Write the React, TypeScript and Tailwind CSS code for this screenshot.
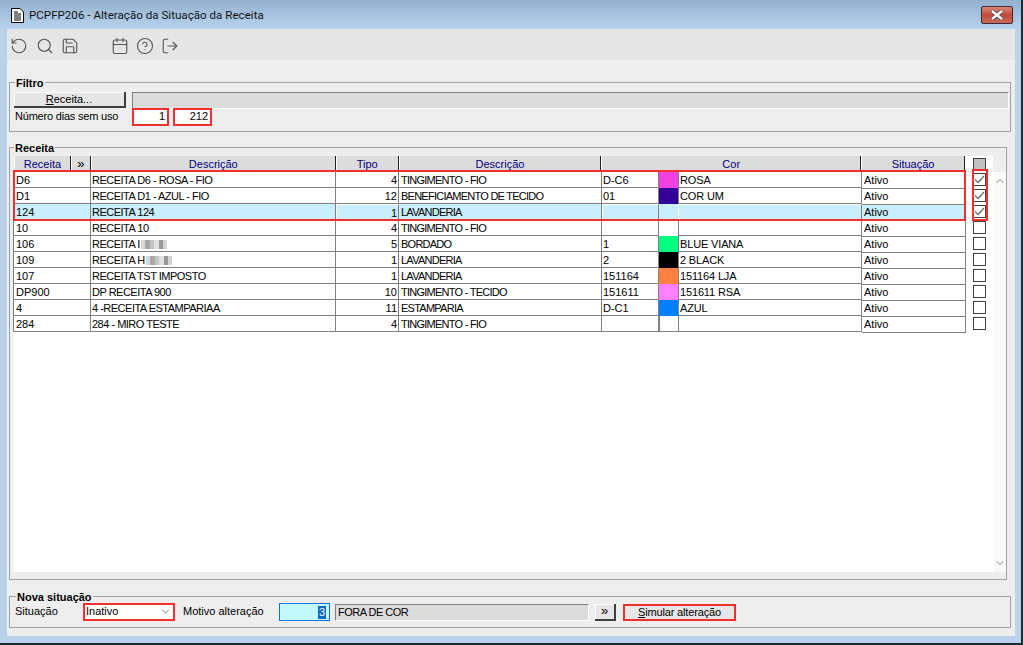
import { Calendar, ChevronDown, ChevronUp, CircleHelp, LogOut, RotateCcw, Save, Search } from "lucide-react";

type Row = {
  code: string;
  name: string;
  blur?: boolean;
  type: string;
  group: string;
  color: string;
  swatch: string;
  colorName: string;
  checked?: boolean;
  active?: boolean;
};

const rows: Row[] = [
  { code: "D6", name: "RECEITA D6 - ROSA - FIO", type: "4", group: "TINGIMENTO - FIO", color: "D-C6", swatch: "bg-[#f040e0]", colorName: "ROSA", checked: true },
  { code: "D1", name: "RECEITA D1 - AZUL - FIO", type: "12", group: "BENEFICIAMENTO DE TECIDO", color: "01", swatch: "bg-[#330099]", colorName: "COR UM", checked: true },
  { code: "124", name: "RECEITA 124", type: "1", group: "LAVANDERIA", color: "", swatch: "bg-[#c9eefc]", colorName: "", checked: true, active: true },
  { code: "10", name: "RECEITA 10", type: "4", group: "TINGIMENTO - FIO", color: "", swatch: "bg-white", colorName: "" },
  { code: "106", name: "RECEITA I", blur: true, type: "5", group: "BORDADO", color: "1", swatch: "bg-[#00ff80]", colorName: "BLUE VIANA" },
  { code: "109", name: "RECEITA H", blur: true, type: "1", group: "LAVANDERIA", color: "2", swatch: "bg-black", colorName: "2 BLACK" },
  { code: "107", name: "RECEITA TST IMPOSTO", type: "1", group: "LAVANDERIA", color: "151164", swatch: "bg-[#ff8040]", colorName: "151164 LJA" },
  { code: "DP900", name: "DP RECEITA 900", type: "10", group: "TINGIMENTO - TECIDO", color: "151611", swatch: "bg-[#ff80ff]", colorName: "151611 RSA" },
  { code: "4", name: "4 -RECEITA ESTAMPARIAA", type: "11", group: "ESTAMPARIA", color: "D-C1", swatch: "bg-[#0080ff]", colorName: "AZUL" },
  { code: "284", name: "284 - MIRO TESTE", type: "4", group: "TINGIMENTO - FIO", color: "", swatch: "bg-white border-l border-b border-[#808080]", colorName: "" },
];

const headers = [
  { label: "Receita", width: "w-[57px]" },
  { label: "»", width: "w-[20px]" },
  { label: "Descrição", width: "w-[245px]" },
  { label: "Tipo", width: "w-[63px]" },
  { label: "Descrição", width: "w-[203px]" },
  { label: "Cor", width: "w-[260px]" },
  { label: "Situação", width: "w-[104px]" },
];

const toolIcons = [
  { Icon: RotateCcw, className: "ml-[3px]" },
  { Icon: Search, className: "ml-[8px]" },
  { Icon: Save, className: "ml-[7px]" },
  { Icon: Calendar, className: "ml-[32px]" },
  { Icon: CircleHelp, className: "ml-[7px]" },
  { Icon: LogOut, className: "ml-[7px]" },
];

function BlurBlocks() {
  return (
    <span className="ml-[1px] inline-flex h-[9px] align-[-1px]">
      <span className="w-[4px] bg-[#d8d8d8]" />
      <span className="w-[5px] bg-[#a8a8a8]" />
      <span className="w-[4px] bg-[#c4c4c4]" />
      <span className="w-[5px] bg-[#e0e0e0]" />
      <span className="w-[4px] bg-[#989898]" />
      <span className="w-[4px] bg-[#d4d4d4]" />
    </span>
  );
}

function CheckBox({ checked }: { checked?: boolean }) {
  return (
    <div className="flex h-[16px] items-start justify-center pt-[1px]">
      <div className="flex h-[13px] w-[13px] items-center justify-center border border-[#404040] bg-white">
        {checked && (
          <svg width="11" height="9" viewBox="0 0 11 9" fill="none" stroke="#707070" strokeWidth="1.4">
            <path d="M1 4.5 L4 7.5 L10 1" />
          </svg>
        )}
      </div>
    </div>
  );
}

function GridRow({ row }: { row: Row }) {
  const bg = row.active ? "bg-[#c9eefc]" : "bg-white";
  const inset = row.active ? "border-t border-l border-t-white border-l-white" : "";
  const cell = `h-[16px] truncate border-r border-b border-r-[#808080] border-b-[#808080] pt-[1px] leading-[14px] ${bg}`;
  return (
    <div className="grid h-[16px] grid-cols-[78px_245px_63px_203px_57px_19px_184px_104px]">
      <div className={`${cell} border-l border-l-[#808080] pl-[2px]`}>{row.code}</div>
      <div className={`${cell} pl-[1px] tracking-[-0.5px]`}>
        {row.name}
        {row.blur && <BlurBlocks />}
      </div>
      <div className={`${cell} ${inset} pr-[1px] text-right`}>{row.type}</div>
      <div className={`${cell} pl-[2px] tracking-[-0.75px]`}>{row.group}</div>
      <div className={`${cell} ${inset} pl-[1px]`}>{row.color}</div>
      <div className={`h-[16px] ${row.swatch}`} />
      <div className={`${cell} ${inset} border-l border-l-[#808080] pl-[1px] tracking-[-0.15px]`}>{row.colorName}</div>
      <div className={`${cell} translate-y-px pl-[2px]`}>
        <span className="relative -top-px">Ativo</span>
      </div>
    </div>
  );
}

export default function App() {
  return (
    <div className="h-[645px] w-[1023px] overflow-hidden bg-[#1a2a30] font-['Liberation_Sans',sans-serif] text-[11px] text-black">
      <div className="h-[643px] w-[1021px] bg-[#b9d1ea]">
        <div className="flex h-[29px] items-center bg-gradient-to-b from-[#93b0ce] to-[#b9d3ee] pr-[8px] pl-[11px]">
          <svg width="13" height="15" viewBox="0 0 13 15" className="mt-[2px]">
            <path d="M0.5 0.5H9L12.5 4V14.5H0.5Z" fill="#fff" stroke="#000" />
            <path d="M3 4H7M3 6H10M3 8H10M3 10H10M3 12H10" stroke="#000" />
          </svg>
          <span className="mt-[3px] ml-[5px] font-['Roboto',sans-serif] text-[11.5px] tracking-[0.05px] text-[#111]">
            PCPFP206 - Alteração da Situação da Receita
          </span>
          <div className="ml-auto flex h-[18px] w-[32px] items-center justify-center rounded-[2px] border border-[#3c2a34] bg-gradient-to-b from-[#d88a78] via-[#c4493a] to-[#c86a58]">
            <svg width="14" height="10" viewBox="0 0 14 10">
              <path d="M2 1 L12 9 M12 1 L2 9" stroke="#44465a" strokeWidth="4" />
              <path d="M2 1 L12 9 M12 1 L2 9" stroke="#fff" strokeWidth="2.4" />
            </svg>
          </div>
        </div>

        <div className="ml-[7px] flex h-[607px] w-[1008px] flex-col bg-[#eeeeee]">
          <div className="flex h-[31px] shrink-0 items-center bg-[#e6e6e6] pt-[2px] text-[#555555]">
            {toolIcons.map(({ Icon, className }, i) => (
              <Icon key={i} size={18} strokeWidth={1.5} className={className} />
            ))}
          </div>

          <fieldset className="mt-[16px] ml-[2px] h-[56px] w-[1002px] shrink-0 border border-[#a0a0a0] pt-[3px] pl-[4px]">
            <legend className="relative top-[1px] ml-[1px] px-[1px] text-[11px] leading-[13px] font-bold">Filtro</legend>
            <div className="flex">
              <button className="h-[16px] w-[112px] border-r-2 border-b-2 border-r-[#404040] border-b-[#404040] bg-[#e6e6e6] text-[11px] leading-[13px] shadow-[inset_1px_1px_0_#fff]">
                <span className="underline">R</span>eceita...
              </button>
              <div className="ml-[6px] h-[17px] w-[877px] border border-[#808080] border-r-white border-b-white bg-[#dcdcdc]" />
            </div>
            <div className="-mt-[1px] flex items-center">
              <span className="-mt-[2px] w-[118px] pl-[1px] tracking-[-0.2px]">Número dias sem uso</span>
              <div className="h-[18px] w-[37px] border-2 border-[#f03030] bg-white pr-[2px] text-right leading-[13px]">1</div>
              <div className="ml-[4px] h-[18px] w-[39px] border-2 border-[#f03030] bg-white pr-[2px] text-right leading-[13px]">212</div>
            </div>
          </fieldset>

          <fieldset className="mt-[9px] ml-[2px] h-[439px] w-[996px] shrink-0 border border-[#a0a0a0] pt-[2px] pl-[3px]">
            <legend className="relative top-[1px] ml-[1px] px-[1px] text-[11px] leading-[13px] font-bold">Receita</legend>
            <div className="flex h-[15px] w-[980px] pl-[1px]">
              {headers.map((h, i) => (
                <div
                  key={i}
                  className={`${h.width} flex h-[15px] items-center justify-center border-r border-l border-r-[#202020] border-l-white bg-[#dcdcdc] leading-[14px] text-[#000080] ${h.label === "»" ? "text-[13px] text-black" : ""}`}
                >
                  {h.label}
                </div>
              ))}
              <div className="flex h-[15px] w-[28px] shrink-0 items-start bg-white pt-[2px] pl-[8px]">
                <div className="h-[13px] w-[13px] border border-[#404040] bg-[#c0c0c0]" />
              </div>
            </div>
            <div className="relative mt-[1px] flex h-[400px] w-[993px] bg-white">
              <div className="w-[953px]">
                {rows.map((row) => (
                  <GridRow key={row.code} row={row} />
                ))}
              </div>
              <div className="w-[28px]">
                {rows.map((row) => (
                  <div key={row.code} className="pr-[4px] pl-[3px]">
                    <CheckBox checked={row.checked} />
                  </div>
                ))}
              </div>
              <div className="flex w-[12px] flex-col items-center justify-between bg-[#fafafa] py-[3px] text-[#c0c0c0]">
                <ChevronUp size={12} strokeWidth={3} />
                <ChevronDown size={12} strokeWidth={3} />
              </div>
              <div className="pointer-events-none absolute top-[-2px] left-0 h-[51px] w-[953px] border-2 border-[#f03030]" />
              <div className="pointer-events-none absolute top-[-3px] left-[959px] h-[52px] w-[16px] border-2 border-[#f03030]" />
            </div>
          </fieldset>

          <fieldset className="mt-[10px] ml-[2px] h-[38px] w-[1002px] shrink-0 border border-[#a0a0a0] pl-[5px]">
            <legend className="relative top-[1px] ml-[1px] px-[1px] text-[11px] leading-[13px] font-bold">Nova situação</legend>
            <div className="flex h-[18px] items-center">
              <span className="w-[68px] pb-[1px]">Situação</span>
              <div className="flex h-[18px] w-[92px] items-center justify-between border-2 border-[#f03030] bg-white pr-[1px] pb-[1px] pl-[1px]">
                <span>Inativo</span>
                <ChevronDown size={13} strokeWidth={1.5} className="text-[#666666]" />
              </div>
              <span className="ml-[8px] w-[96px] pb-[1px]">Motivo alteração</span>
              <div className="flex h-[18px] w-[51px] items-center justify-end border border-[#0078d7] bg-[#c4f8ff] pr-[3px]">
                <span className="bg-[#0a6cc8] px-[1px] leading-[13px] text-white">3</span>
              </div>
              <div className="ml-[5px] h-[17px] w-[254px] border border-[#808080] border-r-white border-b-white bg-[#dcdcdc] pl-[2px] leading-[15px] tracking-[-0.5px]">
                FORA DE COR
              </div>
              <button className="ml-[6px] h-[17px] w-[21px] border-r-2 border-b-2 border-r-[#404040] border-b-[#404040] bg-[#e6e6e6] text-[13px] leading-[12px] shadow-[inset_1px_1px_0_#fff]">
                »
              </button>
              <button className="ml-[7px] h-[17px] w-[113px] border-2 border-[#f03030] bg-[#e6e6e6] text-[11px] leading-[13px] tracking-[-0.15px]">
                <span className="underline">S</span>imular alteração
              </button>
            </div>
          </fieldset>
        </div>
      </div>
    </div>
  );
}
